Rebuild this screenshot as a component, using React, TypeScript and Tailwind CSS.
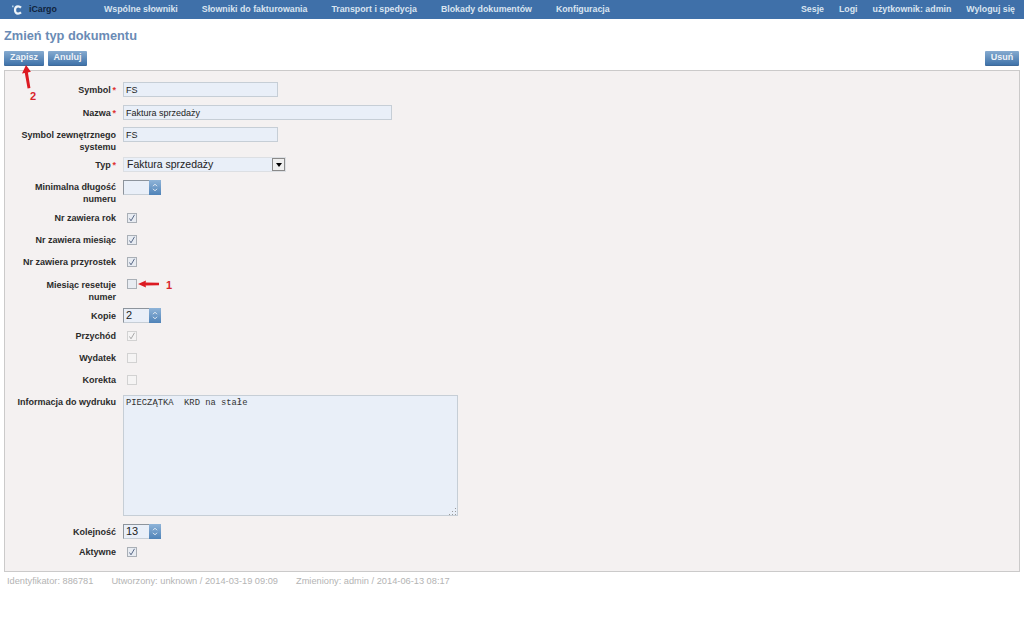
import { ReactNode } from "react";

const navLeft = [
  "Wspólne słowniki",
  "Słowniki do fakturowania",
  "Transport i spedycja",
  "Blokady dokumentów",
  "Konfiguracja",
];
const navRight = ["Sesje", "Logi", "użytkownik: admin", "Wyloguj się"];

const Button = ({ children, className = "" }: { children: ReactNode; className?: string }) => (
  <button
    type="button"
    className={`h-[15px] flex items-center justify-center rounded-[1px] border-b border-[#3f6a99] bg-gradient-to-b from-[#86abd0] to-[#3f73aa] text-[9px] font-bold text-[#eef3f8] ${className}`}
  >
    {children}
  </button>
);

const Label = ({ children, required }: { children: ReactNode; required?: boolean }) => (
  <label className="block w-[118px] shrink-0 pr-[7px] text-right text-[9px] leading-[12px] font-bold text-[#2b2b2b]">
    {children}
    {required && <span className="text-[#d33]">&thinsp;*</span>}
  </label>
);

const Row = ({
  label,
  required,
  className = "",
  labelClass = "",
  children,
}: {
  label: ReactNode;
  required?: boolean;
  className?: string;
  labelClass?: string;
  children: ReactNode;
}) => (
  <div className={`flex ${className}`}>
    <div className={labelClass}>
      <Label required={required}>{label}</Label>
    </div>
    <div>{children}</div>
  </div>
);

const TextInput = ({ value, className = "" }: { value: string; className?: string }) => (
  <input
    readOnly
    defaultValue={value}
    className={`block h-[15px] border border-[#c6ced6] bg-[#e9eff8] px-[2px] text-[9px] text-[#222] outline-none ${className}`}
  />
);

const Spinner = ({ value = "" }: { value?: string }) => (
  <div className="flex h-[15px] w-[38px]">
    <input
      readOnly
      defaultValue={value}
      className="w-[26px] border border-r-0 border-t-[#8d949c] border-l-[#8d949c] border-b-[#c6ced6] bg-[#e9eff8] px-[2px] text-[11px] text-[#222] outline-none"
    />
    <div className="flex w-[12px] items-center justify-center bg-gradient-to-b from-[#8fb4d8] to-[#4f83b8]">
      <svg width="6" height="9" viewBox="0 0 6 9" fill="none" stroke="#e8eef5" strokeWidth="1">
        <path d="M1 3.2 3 1.2 5 3.2M1 5.8 3 7.8 5 5.8" />
      </svg>
    </div>
  </div>
);

const Check = ({ checked, muted }: { checked?: boolean; muted?: boolean }) => (
  <div
    className={`ml-[4px] flex h-[10px] w-[10px] items-center justify-center border ${
      muted ? "border-[#d2d2d2] bg-[#f5f4f4]" : "border-[#a9afb6] bg-[#e8ecf2]"
    }`}
  >
    {checked && (
      <svg width="8" height="8" viewBox="0 0 8 8" fill="none" stroke={muted ? "#a8a8a8" : "#5a6a88"} strokeWidth="1">
        <path d="M1.5 4.5 3 6.8 6.5 0.8" />
      </svg>
    )}
  </div>
);

const CheckRow = ({ label, className, ...rest }: { label: string; className: string; checked?: boolean; muted?: boolean }) => (
  <div className={`flex h-[16px] items-center ${className}`}>
    <Label>{label}</Label>
    <Check {...rest} />
  </div>
);

export default function App() {
  return (
    <div className="relative h-[618px] w-[1024px] overflow-hidden bg-white font-['Liberation_Sans',Arial,sans-serif]">
      <nav className="flex h-[19px] items-center justify-between bg-[#3f70a9] pr-[9px] pl-[12px] text-[8.8px] font-bold text-[#d9e4f0]">
        <div className="flex items-center">
          <svg width="10" height="10" viewBox="0 0 10 10" fill="none">
            <path d="M9 2.6C8 1.6 7 1.4 6 1.4 4 1.4 3 3.2 3 5s1.1 3.6 3 3.6c1 0 2-.3 3-1.2" stroke="#eef4f9" strokeWidth="2.2" />
            <path d="M0 .6h1.6v1.6H0z" fill="#a9cde9" />
          </svg>
          <span className="ml-[7px] w-[75px] text-[#10233c]">iCargo</span>
          <div className="flex gap-[24px]">
            {navLeft.map((item) => (
              <a key={item}>{item}</a>
            ))}
          </div>
        </div>
        <div className="flex gap-[15px]">
          {navRight.map((item) => (
            <a key={item}>{item}</a>
          ))}
        </div>
      </nav>

      <h1 className="mt-[9px] ml-[4px] text-[12.8px] leading-[15px] font-bold text-[#6a8bb5]">Zmień typ dokumentu</h1>

      <div className="mx-[4px] mt-[8px] flex justify-between pr-px">
        <div className="flex gap-[4px]">
          <Button className="w-[40px]">Zapisz</Button>
          <Button className="w-[39px]">Anuluj</Button>
        </div>
        <Button className="w-[34px]">Usuń</Button>
      </div>

      <main className="mx-[4px] mt-[4px] h-[502px] border border-[#cbcaca] bg-[#f4f1f1] pt-[11px]">
        <Row label="Symbol" required labelClass="pt-[2px]" className="h-[15px]">
          <TextInput value="FS" className="w-[155px]" />
        </Row>
        <Row label="Nazwa" required labelClass="pt-[2px]" className="mt-[8px] h-[15px]">
          <TextInput value="Faktura sprzedaży" className="w-[269px]" />
        </Row>
        <Row label={<>Symbol zewnętrznego<br />systemu</>} labelClass="pt-[2px]" className="mt-[7px] h-[30px]">
          <TextInput value="FS" className="w-[155px]" />
        </Row>
        <Row label="Typ" required labelClass="pt-[2px]" className="h-[15px]">
          <div className="flex h-[15px] w-[163px] items-center justify-between border border-[#dcdfe3] bg-[#e9eff8] pl-[3px] text-[10.5px] text-[#222]">
            Faktura sprzedaży
            <div className="flex h-[13px] w-[13px] items-center justify-center border border-[#8a8a8a] bg-[#efefef]">
              <div className="h-0 w-0 border-x-[3.5px] border-t-[4px] border-x-transparent border-t-black" />
            </div>
          </div>
        </Row>
        <Row label={<>Minimalna długość<br />numeru</>} labelClass="pt-[1px]" className="mt-[8px] h-[30px]">
          <Spinner />
        </Row>

        <CheckRow label="Nr zawiera rok" checked className="" />
        <CheckRow label="Nr zawiera miesiąc" checked className="mt-[6px]" />
        <CheckRow label="Nr zawiera przyrostek" checked className="mt-[6px]" />

        <Row label={<>Miesiąc resetuje<br />numer</>} labelClass="pt-[3px]" className="mt-[6px] h-[32px]">
          <div className="mt-[3px]">
            <Check />
          </div>
        </Row>
        <Row label="Kopie" labelClass="pt-[2px]" className="h-[15px]">
          <Spinner value="2" />
        </Row>
        <CheckRow label="Przychód" checked muted className="mt-[5px]" />
        <CheckRow label="Wydatek" muted className="mt-[6px]" />
        <CheckRow label="Korekta" muted className="mt-[6px]" />

        <Row label="Informacja do wydruku" labelClass="pt-[1px]" className="mt-[7px]">
          <div className="relative">
            <textarea
              readOnly
              defaultValue="PIECZĄTKA  KRD na stałe"
              className="block h-[121px] w-[335px] resize-none border border-[#c6ced6] bg-[#e9eff8] px-[2px] py-[1px] font-['Liberation_Mono',monospace] text-[8.8px] text-[#333] outline-none"
            />
            {/* dotted resize grip in the corner */}
            <svg className="absolute right-[1px] bottom-[1px]" width="8" height="8" viewBox="0 0 8 8" fill="#9a9a9a">
              <path d="M6 1h1v1H6zM3 4h1v1H3zM6 4h1v1H6zM0 7h1v1H0zM3 7h1v1H3zM6 7h1v1H6z" />
            </svg>
          </div>
        </Row>
        <Row label="Kolejność" labelClass="pt-[2px]" className="mt-[8px] h-[15px]">
          <Spinner value="13" />
        </Row>
        <CheckRow label="Aktywne" checked className="mt-[5px]" />
      </main>

      <footer className="mt-[4px] ml-[7px] flex gap-[18px] text-[9.25px] leading-[11px] text-[#b4b4b4]">
        <span>Identyfikator: 886781</span>
        <span>Utworzony: unknown / 2014-03-19 09:09</span>
        <span>Zmieniony: admin / 2014-06-13 08:17</span>
      </footer>

      {/* red annotations sit over the form */}
      <svg className="absolute top-[62px] left-[20px]" width="14" height="30" viewBox="0 0 14 30" fill="#dc1a22">
        <path d="M6 3 2 11.5 4.8 11 7.6 26.5 10.4 26 7.9 10.4 10.9 9.8z" />
      </svg>
      <span className="absolute top-[90px] left-[30px] text-[11px] leading-[12px] font-bold text-[#d9252b]">2</span>
      <svg className="absolute top-[280px] left-[137px]" width="24" height="8" viewBox="0 0 24 8" fill="#dc1a22">
        <path d="M1 4 9 .4 8.6 2.6 22 2.8V5.2L8.6 5.4 9 7.6z" />
      </svg>
      <span className="absolute top-[279px] left-[166px] text-[11px] leading-[12px] font-bold text-[#d9252b]">1</span>
    </div>
  );
}
